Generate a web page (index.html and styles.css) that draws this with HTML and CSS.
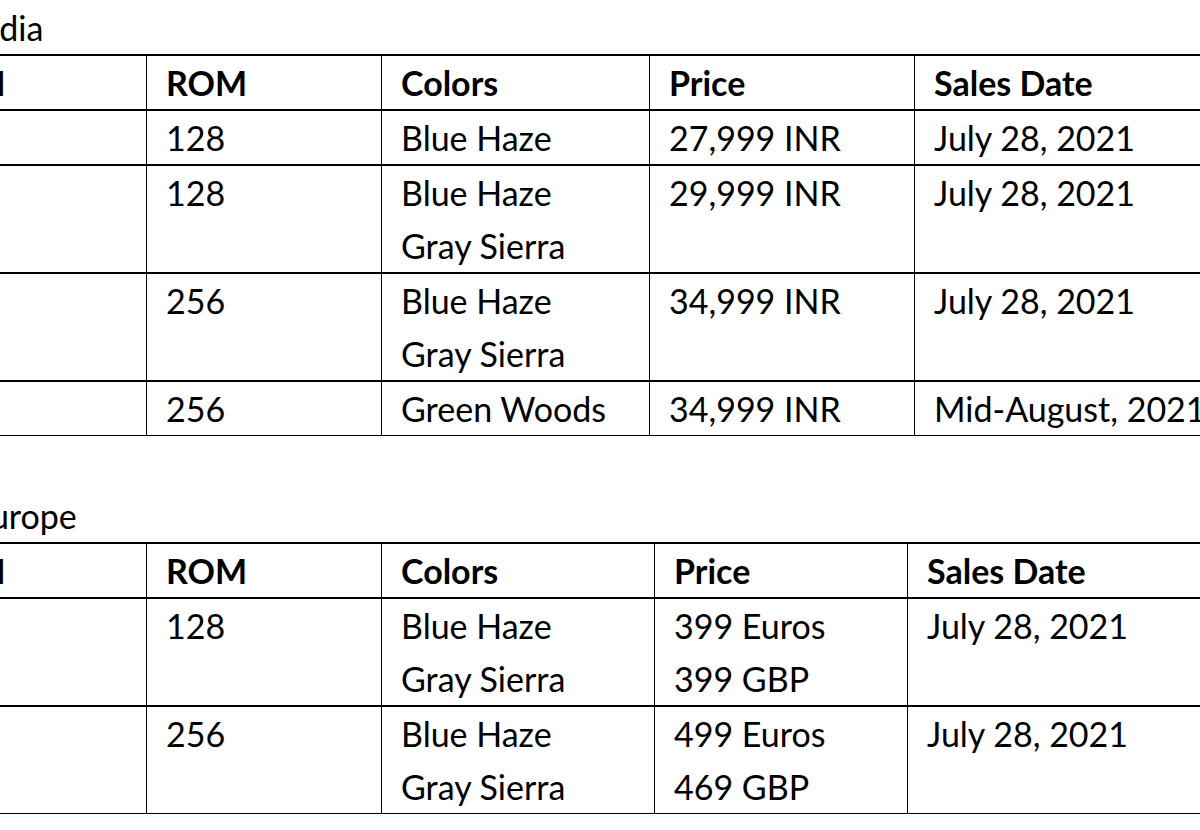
FILE: index.html
```html
<!DOCTYPE html>
<html lang="en">
<head>
<meta charset="utf-8">
<title>OnePlus Nord 2 pricing</title>
<link rel="stylesheet" href="styles.css">
</head>
<body>
<div class="doc">
  <section class="region">
    <p class="region-title">India</p>
    <table class="specs">
      <colgroup>
        <col class="c-ram"><col class="c-rom"><col class="c-colors-in"><col class="c-price-in"><col class="c-date-in">
      </colgroup>
      <thead>
        <tr><th>RAM</th><th>ROM</th><th>Colors</th><th>Price</th><th>Sales Date</th></tr>
      </thead>
      <tbody>
        <tr><td>8</td><td>128</td><td>Blue Haze</td><td>27,999 INR</td><td>July 28, 2021</td></tr>
        <tr><td>8</td><td>128</td><td>Blue Haze<br>Gray Sierra</td><td>29,999 INR</td><td>July 28, 2021</td></tr>
        <tr><td>12</td><td>256</td><td>Blue Haze<br>Gray Sierra</td><td>34,999 INR</td><td>July 28, 2021</td></tr>
        <tr><td>12</td><td>256</td><td>Green Woods</td><td>34,999 INR</td><td>Mid-August, 2021</td></tr>
      </tbody>
    </table>
  </section>
  <section class="region region-eu">
    <p class="region-title">Europe</p>
    <table class="specs">
      <colgroup>
        <col class="c-ram"><col class="c-rom"><col class="c-colors-eu"><col class="c-price-eu"><col class="c-date-eu">
      </colgroup>
      <thead>
        <tr><th>RAM</th><th>ROM</th><th>Colors</th><th>Price</th><th>Sales Date</th></tr>
      </thead>
      <tbody>
        <tr><td>8</td><td>128</td><td>Blue Haze<br>Gray Sierra</td><td>399 Euros<br>399 GBP</td><td>July 28, 2021</td></tr>
        <tr><td>12</td><td>256</td><td>Blue Haze<br>Gray Sierra</td><td>499 Euros<br>469 GBP</td><td>July 28, 2021</td></tr>
      </tbody>
    </table>
  </section>
</div>
</body>
</html>
```

FILE: styles.css
```css
html, body {
  margin: 0;
  padding: 0;
  background: #ffffff;
}

body {
  overflow: hidden;
  width: 1200px;
  height: 830px;
  font-family: Lato, "Open Sans", sans-serif;
  font-size: 34px;
  color: #000000;
}

.doc {
  margin-left: -91px;
  width: 1400px;
  padding-top: 1px;
}

.region-title {
  margin: 0 0 0 62px;
  line-height: 53px;
  height: 53px;
}

.region-eu {
  margin-top: 53px;
}

.specs {
  border-collapse: separate;
  border-spacing: 0;
  table-layout: fixed;
  width: 1337px;
}

.c-ram { width: 237px; }
.c-rom { width: 235px; }
.c-colors-in { width: 268px; }
.c-price-in { width: 265px; }
.c-date-in { width: 332px; }
.c-colors-eu { width: 273px; }
.c-price-eu { width: 253px; }
.c-date-eu { width: 339px; }

.specs th,
.specs td {
  text-align: left;
  vertical-align: top;
  padding: 0 0 0 19px;
  line-height: 53px;
  border-top: 2px solid #000;
  border-left: 1px solid #000;
  white-space: nowrap;
}

.specs th {
  font-weight: 700;
}

.specs th:first-child,
.specs td:first-child {
  border-left: none;
}

.specs tbody tr:last-child td {
  border-bottom: 1px solid #000;
}
```
